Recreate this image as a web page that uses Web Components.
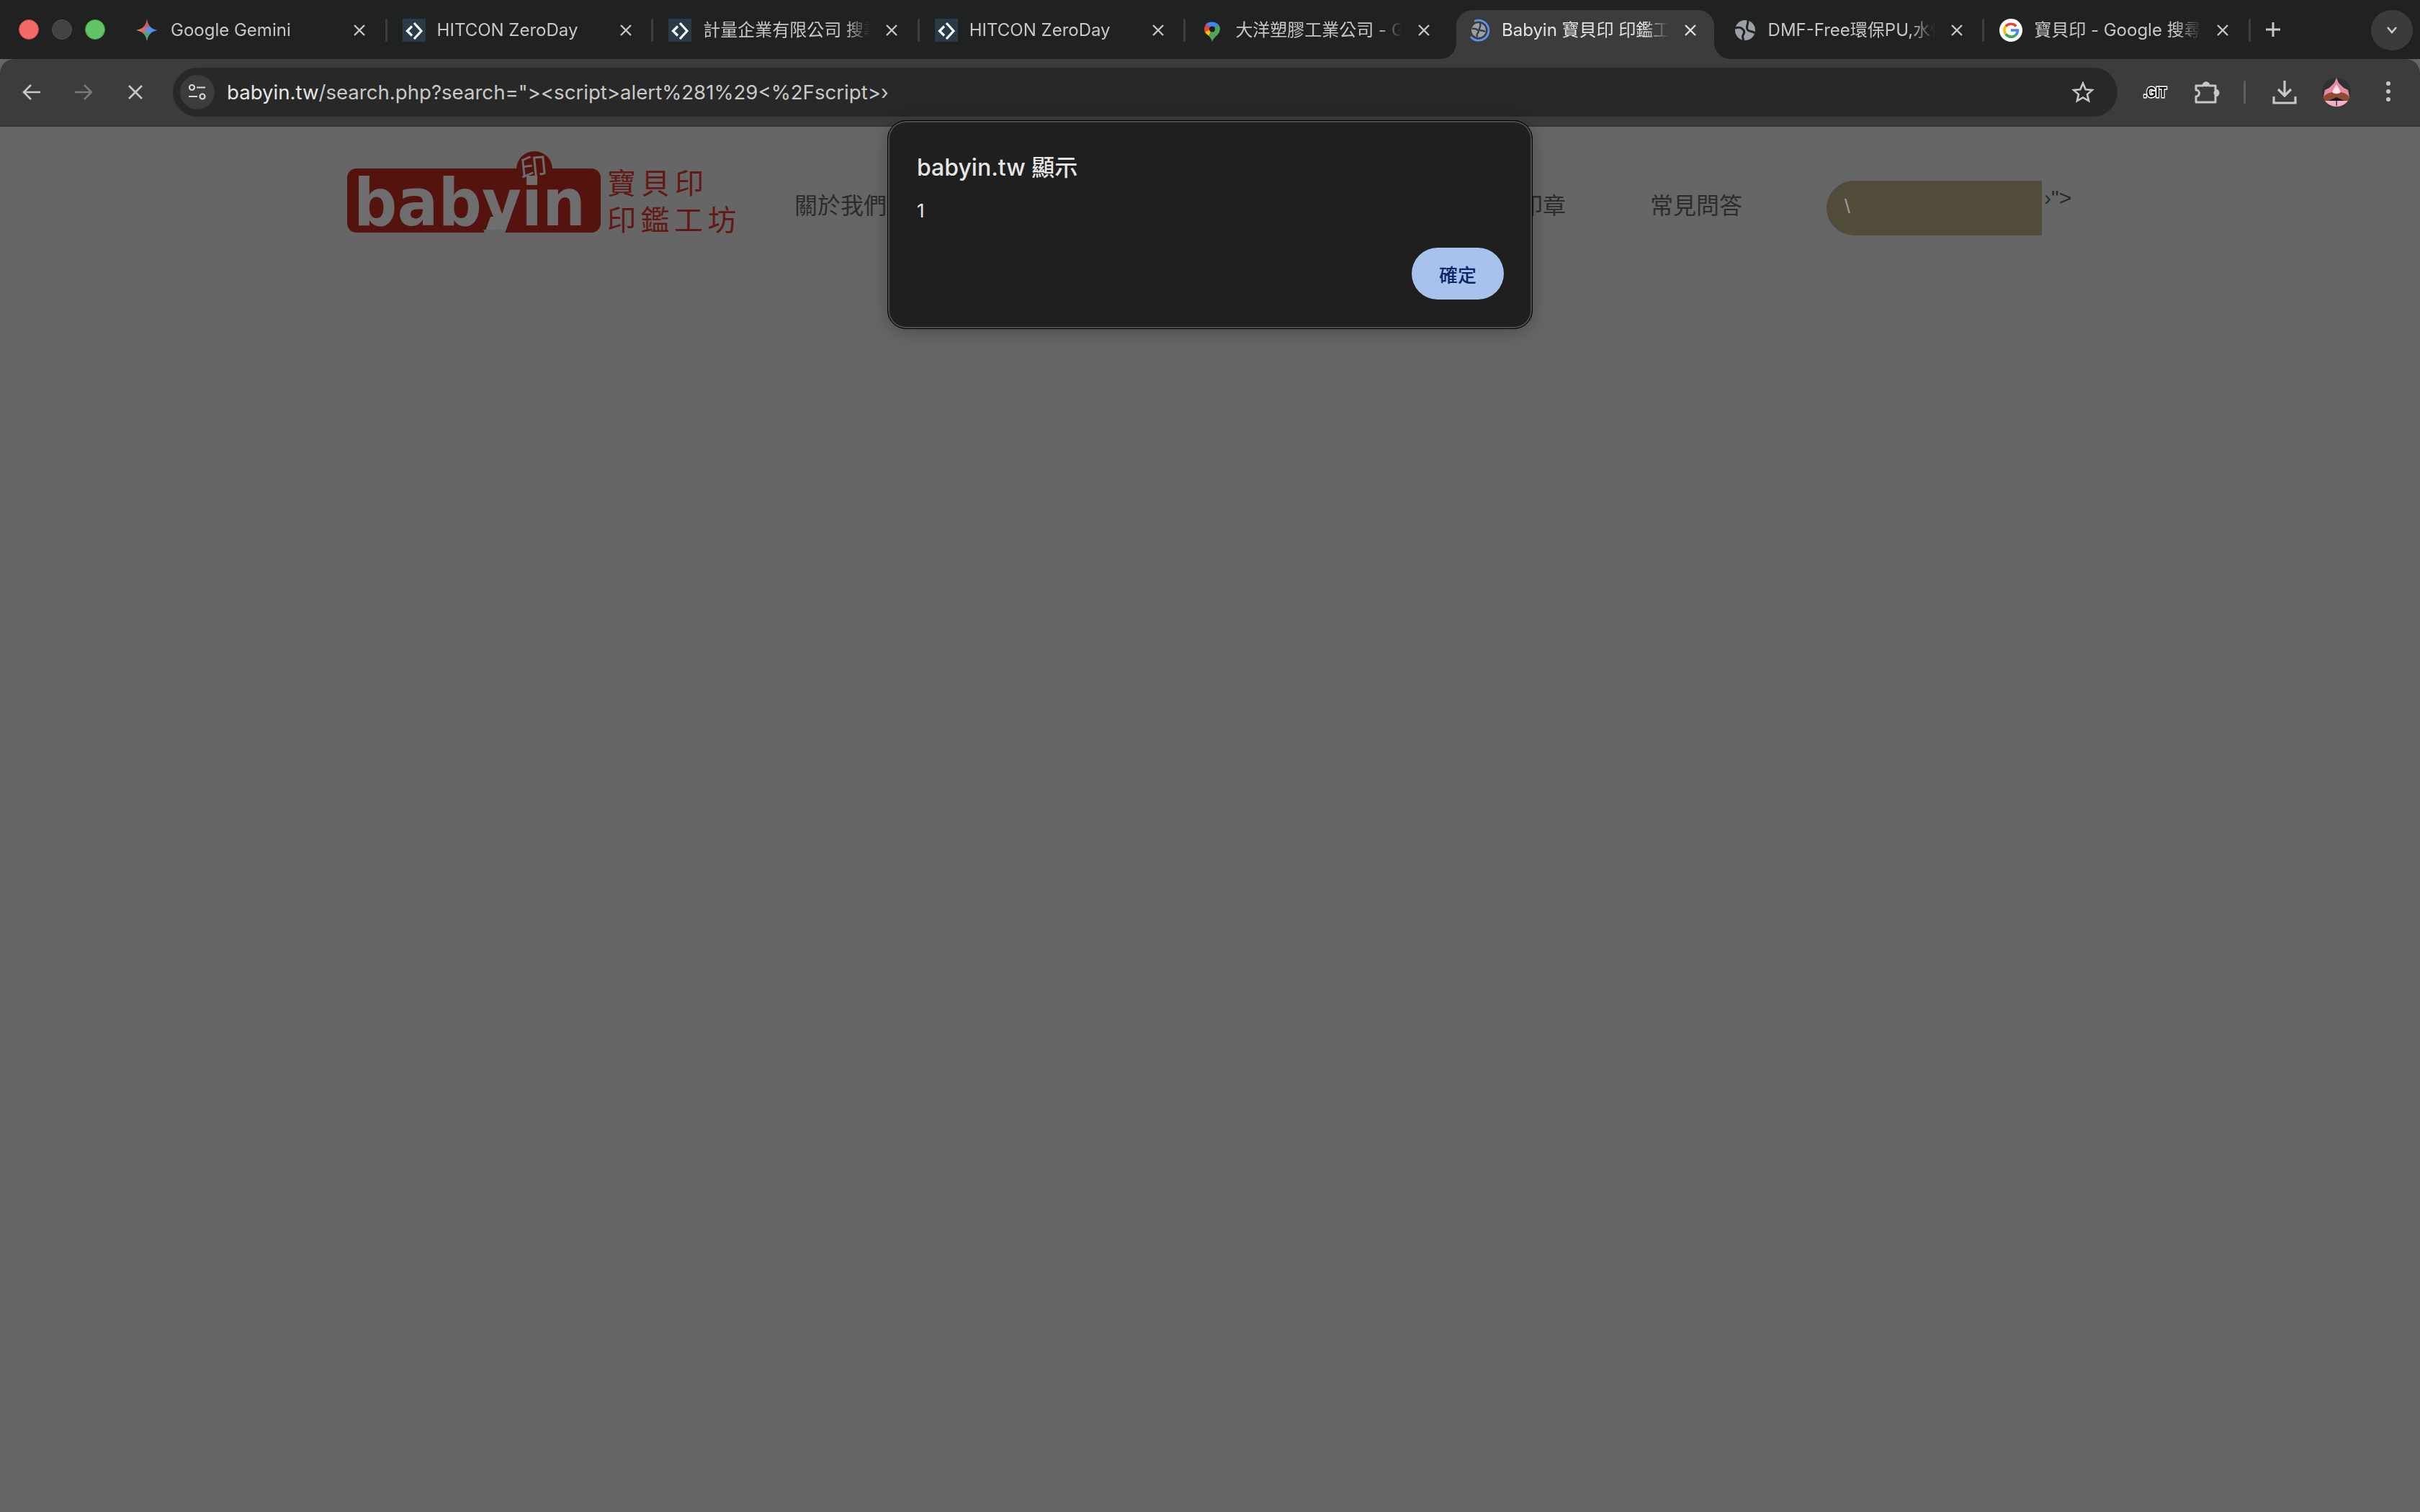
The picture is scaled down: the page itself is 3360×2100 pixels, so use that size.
<!DOCTYPE html>
<html lang="zh-Hant">
<head>
<meta charset="utf-8">
<title>Babyin</title>
<style>
  html, body { margin: 0; padding: 0; background: #666; }
  body { width: 3360px; height: 2100px; overflow: hidden; }
</style>
</head>
<body>
<browser-window>
  <tab-strip>
    <browser-tab icon="gemini" label="Google Gemini" first></browser-tab>
    <browser-tab icon="hitcon" label="HITCON ZeroDay"></browser-tab>
    <browser-tab icon="hitcon" label="計量企業有限公司 搜尋"></browser-tab>
    <browser-tab icon="hitcon" label="HITCON ZeroDay"></browser-tab>
    <browser-tab icon="maps" label="大洋塑膠工業公司 - Google 地圖"></browser-tab>
    <browser-tab icon="loading" label="Babyin 寶貝印 印鑑工坊" active></browser-tab>
    <browser-tab icon="globe" label="DMF-Free環保PU,水性" no-sep></browser-tab>
    <browser-tab icon="google" label="寶貝印 - Google 搜尋"></browser-tab>
  </tab-strip>
  <tool-bar></tool-bar>
  <site-page></site-page>
  <alert-dialog origin="babyin.tw 顯示" message="1" confirm="確定"></alert-dialog>
</browser-window>

<script>
const UI_FONT = `Inter, "Noto Sans CJK TC", sans-serif`;

const FAVICONS = {
  gemini: `<svg width="32" height="32" viewBox="1 0 32 32">
    <defs><linearGradient id="g" x1="0" y1="0.6" x2="1" y2="0.45">
      <stop offset="0" stop-color="#f2b62f"/><stop offset=".32" stop-color="#e2685a"/><stop offset=".55" stop-color="#5a93ec"/><stop offset="1" stop-color="#4285f4"/>
    </linearGradient></defs>
    <path d="M16 1C17.500 10 22 14.500 31 16C22 17.500 17.500 22 16 31C14.500 22 10 17.500 1 16C10 14.500 14.500 10 16 1Z" fill="url(#g)"/>
    <path d="M16 31C15.400 26 13.300 22 10 19.500L22 19.500C18.700 22 16.600 26 16 31Z" fill="#4fa66a"/>
    <path d="M16 1C15.500 5 14 9 11 11.500L21 11.500C18 9 16.500 5 16 1Z" fill="#d9574f"/>
  </svg>`,
  hitcon: `<svg width="32" height="32" viewBox="0 0 32 32">
    <rect width="32" height="32" fill="#2b3a48"/>
    <path d="M13 10.500L6.500 17l6.500 6.500" fill="none" stroke="#fff" stroke-width="3.200"/>
    <path d="M16 6l10 11-10 11" fill="none" stroke="#fff" stroke-width="3.200"/>
  </svg>`,
  maps: `<svg width="32" height="32" viewBox="0 0 32 32">
    <path d="M7 7.500A11 11 0 0 1 16 4.500L16 15Z" fill="#4285f4"/>
    <path d="M16 4.500A11.500 11.500 0 0 1 25 8.500L16 15Z" fill="#4285f4"/>
    <path d="M7.500 7.500L16 15L6 19C4.300 15 5 10.500 7.500 7.500Z" fill="#ea4335"/>
    <path d="M25 8.500C27.500 12 27.500 16 25.500 19.500C23 24 18 26 16 32C15.400 29 13.500 26 11.500 24L16 15Z" fill="#4fa65b"/>
    <path d="M6 18.500L16 14L11.500 24C9.500 22 7.300 21 6 18.500Z" fill="#fbbc04"/>
    <circle cx="16" cy="14.500" r="4" fill="#1d1d1d"/>
  </svg>`,
  loading: `<svg width="32" height="32" viewBox="0 0 32 32">
    <circle cx="16" cy="16" r="10" fill="#9aa0a6"/>
    <path d="M7 14c4-1 6 0 8 2s0 4-1 5 0 3 0 4M25 18c-3-2-5-1-7-2s-1-3 0-5 0-4 0-5" fill="none" stroke="#3c3c3c" stroke-width="2.400"/>
    <path d="M10 3.500A14 14 0 1 1 5 25" fill="none" stroke="#5a93ec" stroke-width="2.800"/>
  </svg>`,
  globe: `<svg width="32" height="32" viewBox="0 0 32 32">
    <circle cx="16" cy="16" r="14" fill="#9aa0a6"/>
    <path d="M2 13c6-2 9-1 12 3 2 3 0 5-1 7s0 5 1 7M30 20c-5-3-8-2-10-4s-2-4-1-7 1-5 1-7" fill="none" stroke="#202221" stroke-width="3"/>
  </svg>`,
  google: `<svg width="32" height="32" viewBox="0 0 32 32">
    <circle cx="16" cy="16" r="16" fill="#fff"/>
    <path d="M23.300 10.500A9.500 9.500 0 0 0 8.800 10.600" fill="none" stroke="#ea4335" stroke-width="3.600"/>
    <path d="M8.800 10.600A9.500 9.500 0 0 0 8.800 21.400" fill="none" stroke="#fbbc04" stroke-width="3.600"/>
    <path d="M8.800 21.400A9.500 9.500 0 0 0 22.800 22.700" fill="none" stroke="#34a853" stroke-width="3.600"/>
    <path d="M22.800 22.700A9.500 9.500 0 0 0 25.500 16H16" fill="none" stroke="#4285f4" stroke-width="3.600"/>
  </svg>`,
};

class BrowserWindow extends HTMLElement {
  constructor() {
    super();
    this.shadowDOM = this.attachShadow({ mode: "open" });
    this.shadowDOM.innerHTML = `
      <style>
        :host {
          display: flex;
          flex-direction: column;
          position: relative;
          width: 3360px;
          height: 2100px;
          background: #666;
          font-family: ${UI_FONT};
        }
      </style>
      <slot></slot>
    `;
  }
}

class TabStrip extends HTMLElement {
  constructor() {
    super();
    this.shadowDOM = this.attachShadow({ mode: "open" });
    this.shadowDOM.innerHTML = `
      <style>
        :host {
          display: flex;
          flex: 0 0 82px;
          background: #202221;
        }
        .lights {
          flex: 0 0 167px;
          box-sizing: border-box;
          display: flex;
          gap: 18px;
          padding: 27px 0 0 26px;
        }
        .lights i {
          width: 28px;
          height: 28px;
          box-sizing: border-box;
          border-radius: 50%;
          border: 1px solid;
        }
        .red { background: #f46a6a; border-color: #d9403a !important; }
        .grey { background: #424443; border-color: #4f5150 !important; }
        .green { background: #62c466; border-color: #3ca33f !important; }
        .tabs { display: flex; }
        .new-tab {
          position: relative;
          flex: 0 0 64px;
          height: 82px;
        }
        .new-tab::before {
          content: "";
          position: absolute;
          left: -2px;
          top: 26px;
          width: 3px;
          height: 32px;
          border-radius: 2px;
          background: #3d3f3f;
        }
        .new-tab svg { position: absolute; left: 21px; top: 30px; }
        .more {
          margin: 14px 10px 0 auto;
          width: 58px;
          height: 56px;
          border-radius: 28px;
          background: #3b3b3b;
          display: flex;
          align-items: center;
          justify-content: center;
        }
      </style>
      <div class="lights"><i class="red"></i><i class="grey"></i><i class="green"></i></div>
      <div class="tabs"><slot></slot></div>
      <div class="new-tab">
        <svg width="22" height="22" viewBox="0 0 22 22"><path d="M11 1v20M1 11h20" stroke="#c7c7c7" stroke-width="3"/></svg>
      </div>
      <div class="more">
        <svg width="16" height="12" viewBox="0 0 16 12"><path d="M2 2l6 7 6-7" fill="none" stroke="#d0d0d0" stroke-width="2.500"/></svg>
      </div>
    `;
  }
}

class BrowserTab extends HTMLElement {
  constructor() {
    super();
    this.shadowDOM = this.attachShadow({ mode: "open" });
  }

  connectedCallback() {
    const icon = FAVICONS[this.getAttribute("icon")] || "";
    this.shadowDOM.innerHTML = `
      <style>
        :host {
          display: block;
          position: relative;
          width: 369.6px;
          height: 82px;
          color: #c7c7c7;
        }
        :host([active]) { color: #e3e3e3; }
        .sep {
          position: absolute;
          left: -2px;
          top: 26px;
          width: 3px;
          height: 32px;
          border-radius: 2px;
          background: #3d3f3f;
        }
        :host([first]) .sep, :host([active]) .sep, :host([no-sep]) .sep { display: none; }
        .shape { display: none; }
        :host([active]) .shape {
          display: block;
          position: absolute;
          left: 7px;
          right: 5px;
          top: 14px;
          bottom: 0;
          background: #3c3c3c;
          border-radius: 22px 22px 0 0;
        }
        :host([active]) .shape::before, :host([active]) .shape::after {
          content: "";
          position: absolute;
          bottom: 0;
          width: 22px;
          height: 22px;
        }
        :host([active]) .shape::before {
          left: -22px;
          background: radial-gradient(circle at 0 0, transparent 21.500px, #3c3c3c 22px);
        }
        :host([active]) .shape::after {
          right: -22px;
          background: radial-gradient(circle at 100% 0, transparent 21.500px, #3c3c3c 22px);
        }
        .row {
          position: relative;
          display: flex;
          align-items: center;
          height: 32px;
          padding: 26px 0 0 22px;
        }
        .icon { flex: 0 0 32px; height: 32px; }
        .icon svg { display: block; }
        .title {
          flex: 0 0 232px;
          margin-left: 16px;
          font-size: 24px;
          line-height: 32px;
          white-space: nowrap;
          overflow: hidden;
          -webkit-mask-image: linear-gradient(to right, #000 198px, transparent 232px);
          mask-image: linear-gradient(to right, #000 198px, transparent 232px);
        }
        .close { margin-left: 21px; display: block; }
      </style>
      <div class="sep"></div>
      <div class="shape"></div>
      <div class="row">
        <div class="icon">${icon}</div>
        <div class="title">${this.getAttribute("label")}</div>
        <svg class="close" width="18" height="18" viewBox="0 0 18 18"><path d="M2 2l14 14M16 2L2 16" stroke="currentColor" stroke-width="2.400"/></svg>
      </div>
    `;
  }
}

class ToolBar extends HTMLElement {
  constructor() {
    super();
    this.shadowDOM = this.attachShadow({ mode: "open" });
    this.shadowDOM.innerHTML = `
      <style>
        :host {
          display: flex;
          flex: 0 0 94px;
          align-items: flex-start;
          box-sizing: border-box;
          padding: 12px 8px 0;
          background: #3c3c3c;
          border-radius: 20px 20px 0 0;
          box-shadow: inset 0 -2px 0 #373737;
        }
        .btn {
          flex: 0 0 72px;
          height: 68px;
          display: flex;
          align-items: center;
          justify-content: center;
        }
        .omni { flex: 0 0 2700px; margin: 0 16px 0 16px; }
        .sep {
          flex: 0 0 3px;
          height: 32px;
          margin: 18px 18px 0 15px;
          border-radius: 2px;
          background: #5f5f5f;
        }
        .git text { paint-order: stroke; }
      </style>
      <div class="btn"><svg width="26" height="24" viewBox="0 0 26 24"><path d="M25 12H3M12 2L2 12l10 10" fill="none" stroke="#c7c7c7" stroke-width="2.600"/></svg></div>
      <div class="btn"><svg width="26" height="24" viewBox="0 0 26 24"><path d="M1 12h22M14 2l10 10-10 10" fill="none" stroke="#7b7b7b" stroke-width="2.600"/></svg></div>
      <div class="btn"><svg width="22" height="22" viewBox="0 0 22 22"><path d="M2 2l18 18M20 2L2 20" stroke="#c7c7c7" stroke-width="2.600"/></svg></div>
      <omni-box class="omni"></omni-box>
      <div class="btn git"><svg width="36" height="24" viewBox="0 0 36 24"><text x="2" y="19" font-family="'Liberation Sans', sans-serif" font-size="20" font-weight="700" fill="#000" stroke="#fff" stroke-width="3" textLength="32" lengthAdjust="spacingAndGlyphs">.GIT</text></svg></div>
      <div class="btn"><svg width="36" height="34" viewBox="0 0 36 34"><path d="M3 8H13a4 4 0 0 1 8 0H30V14a4 4 0 0 1 0 8V31H3V23a4.500 4.500 0 0 0 0-9Z" fill="none" stroke="#c7c7c7" stroke-width="3" stroke-linejoin="round"/><circle cx="31" cy="18" r="3.500" fill="#c7c7c7"/><circle cx="17" cy="6" r="3.500" fill="#c7c7c7"/></svg></div>
      <div class="sep"></div>
      <div class="btn"><svg width="34" height="34" viewBox="0 0 34 34"><path d="M17 1v21M8 13l9 9 9-9M2 23v9h30v-9" fill="none" stroke="#c7c7c7" stroke-width="3.200"/></svg></div>
      <div class="btn">
        <svg width="40" height="40" viewBox="0 0 40 40">
          <defs><clipPath id="a"><circle cx="20" cy="20" r="20"/></clipPath></defs>
          <g clip-path="url(#a)">
            <rect width="40" height="40" fill="#2b3432"/>
            <path d="M20 0l3 7 7 7 6 3 2 9-2 4H4l-2-4 2-9 6-3 7-7z" fill="#ea8aa0"/>
            <path d="M20 9l4 7 3 6 -7 3-7-3 3-6z" fill="#fbe3e8"/>
            <path d="M1 27c5-5 9-6 13-7 4 3 8 3 12 0 4 1 8 2 13 7v6H1z" fill="#8f4a33"/>
            <path d="M9 32l11-5 11 5z" fill="#1c1c1c"/>
            <rect y="32" width="40" height="8" fill="#f2b0c8"/>
            <rect x="19.500" y="32" width="1.200" height="7" fill="#1c1c1c"/>
          </g>
        </svg>
      </div>
      <div class="btn"><svg width="8" height="32" viewBox="0 0 8 32"><circle cx="4" cy="4" r="3" fill="#c7c7c7"/><circle cx="4" cy="15" r="3" fill="#c7c7c7"/><circle cx="4" cy="26" r="3" fill="#c7c7c7"/></svg></div>
    `;
  }
}

class OmniBox extends HTMLElement {
  constructor() {
    super();
    this.shadowDOM = this.attachShadow({ mode: "open" });
    this.shadowDOM.innerHTML = `
      <style>
        :host {
          display: flex;
          align-items: center;
          box-sizing: border-box;
          height: 68px;
          padding: 0 32px 0 10px;
          background: #282828;
          border-radius: 34px;
        }
        .chip {
          flex: 0 0 48px;
          height: 48px;
          border-radius: 50%;
          background: #3c3c3c;
          display: flex;
          align-items: center;
          justify-content: center;
        }
        .url {
          flex: 1;
          margin-left: 17px;
          font-size: 27.6px;
          color: #c9c9c9;
          white-space: nowrap;
        }
        .url b { font-weight: 400; color: #e6e6e6; }
      </style>
      <div class="chip">
        <svg width="26" height="24" viewBox="0 0 26 24">
          <circle cx="5.500" cy="5.500" r="3.500" fill="none" stroke="#d8d8d8" stroke-width="2.200"/>
          <path d="M12 5.500h12M1 18h12" stroke="#d8d8d8" stroke-width="2.200"/>
          <circle cx="20" cy="18" r="3.500" fill="none" stroke="#d8d8d8" stroke-width="2.200"/>
        </svg>
      </div>
      <div class="url"><b>babyin.tw</b>/search.php?search="&gt;&lt;script&gt;alert%281%29&lt;%2Fscript&gt;›</div>
      <svg width="32" height="30" viewBox="0 0 32 30"><path d="M16 2.500l3.700 8.700 9.300.8-7 6.100 2.100 9.100-8.100-4.800-8.100 4.800 2.100-9.100-7-6.100 9.300-.8z" fill="none" stroke="#c7c7c7" stroke-width="2.600"/></svg>
    `;
  }
}

class SitePage extends HTMLElement {
  constructor() {
    super();
    this.shadowDOM = this.attachShadow({ mode: "open" });
    this.shadowDOM.innerHTML = `
      <style>
        :host {
          display: block;
          flex: 1;
          background: #666;
          font-family: "Noto Sans CJK TC", sans-serif;
        }
        header {
          display: flex;
          align-items: flex-start;
          padding: 29px 0 0 481px;
        }
        nav {
          display: flex;
          align-items: center;
          height: 156px;
          margin-left: 79px;
          font-size: 32px;
          color: #2c2c2c;
        }
        .about { width: 1007px; }
        .stamp { width: 181px; }
        .faq { width: 245px; }
        .search {
          box-sizing: border-box;
          width: 299px;
          height: 76px;
          margin-top: 12px;
          padding: 20px 0 0 25px;
          background: #524c3a;
          border-radius: 38px 0 0 38px;
          font-family: "Liberation Sans", sans-serif;
          font-size: 28px;
          color: #9a9a9a;
        }
        .rest {
          font-family: "Liberation Sans", sans-serif;
          font-size: 30px;
          color: #2a2a2a;
          margin: -16px 0 0 3px;
        }
      </style>
      <header>
        <site-logo></site-logo>
        <nav>
          <span class="about">關於我們</span>
          <span class="stamp">印章</span>
          <span class="faq">常見問答</span>
          <span class="search">\\</span>
          <span class="rest">›"&gt;</span>
        </nav>
      </header>
    `;
  }
}

class SiteLogo extends HTMLElement {
  constructor() {
    super();
    this.shadowDOM = this.attachShadow({ mode: "open" });
    this.shadowDOM.innerHTML = `
      <style>
        :host { display: block; width: 543px; height: 130px; }
        svg { display: block; }
      </style>
      <svg width="543" height="130" viewBox="0 0 543 130">
        <defs><clipPath id="plate"><rect x="1" y="29" width="352" height="89"/></clipPath></defs>
        <rect x="1" y="29" width="352" height="89" rx="13" fill="#55130e"/>
        <circle cx="261" cy="30" r="25" fill="#55130e"/>
        <polygon points="192,118 219,118 228,96 200,96" fill="#6e6e6e"/>
        <text x="10" y="108" clip-path="url(#plate)" font-family="'DejaVu Sans', sans-serif" font-size="91" font-weight="700" fill="#6e6e6e" textLength="322" lengthAdjust="spacingAndGlyphs">babyin</text>
        <polygon points="192,118.500 219,118.500 221,114 190,114" fill="#666"/>
        <text x="241" y="42" font-family="'Noto Sans CJK TC', sans-serif" font-size="38" fill="#6e6e6e" transform="rotate(-6 261 30)">印</text>
        <g font-family="'Noto Sans CJK TC', sans-serif" font-size="40" fill="#641815">
          <text x="362" y="64" letter-spacing="7">寶貝印</text>
          <text x="362" y="115" letter-spacing="6.500">印鑑工坊</text>
        </g>
      </svg>
    `;
  }
}

class AlertDialog extends HTMLElement {
  constructor() {
    super();
    this.shadowDOM = this.attachShadow({ mode: "open" });
  }

  connectedCallback() {
    this.shadowDOM.innerHTML = `
      <style>
        :host {
          display: flex;
          flex-direction: column;
          position: absolute;
          left: 1232px;
          top: 167px;
          box-sizing: border-box;
          width: 896px;
          height: 290px;
          padding: 45px 39px 0 40px;
          background: #1f1f1f;
          border: 1px solid #000;
          border-radius: 26px;
          box-shadow: inset 0 0 0 2px #4c4c4c, 0 4px 24px rgba(0, 0, 0, .25);
          font-family: ${UI_FONT};
        }
        .title { font-size: 32px; line-height: 40px; font-weight: 500; color: #e6e6e6; }
        .message { margin-top: 22px; font-size: 26px; line-height: 36px; color: #e6e6e6; }
        button {
          align-self: flex-end;
          margin-top: 33px;
          width: 128px;
          height: 72px;
          border: 0;
          border-radius: 36px;
          background: #a8c2ee;
          color: #0b2566;
          font-family: inherit;
          font-size: 26px;
          font-weight: 500;
        }
      </style>
      <div class="title">${this.getAttribute("origin")}</div>
      <div class="message">${this.getAttribute("message")}</div>
      <button>${this.getAttribute("confirm")}</button>
    `;
  }
}

customElements.define("browser-window", BrowserWindow);
customElements.define("tab-strip", TabStrip);
customElements.define("browser-tab", BrowserTab);
customElements.define("tool-bar", ToolBar);
customElements.define("omni-box", OmniBox);
customElements.define("site-page", SitePage);
customElements.define("site-logo", SiteLogo);
customElements.define("alert-dialog", AlertDialog);
</script>
</body>
</html>
